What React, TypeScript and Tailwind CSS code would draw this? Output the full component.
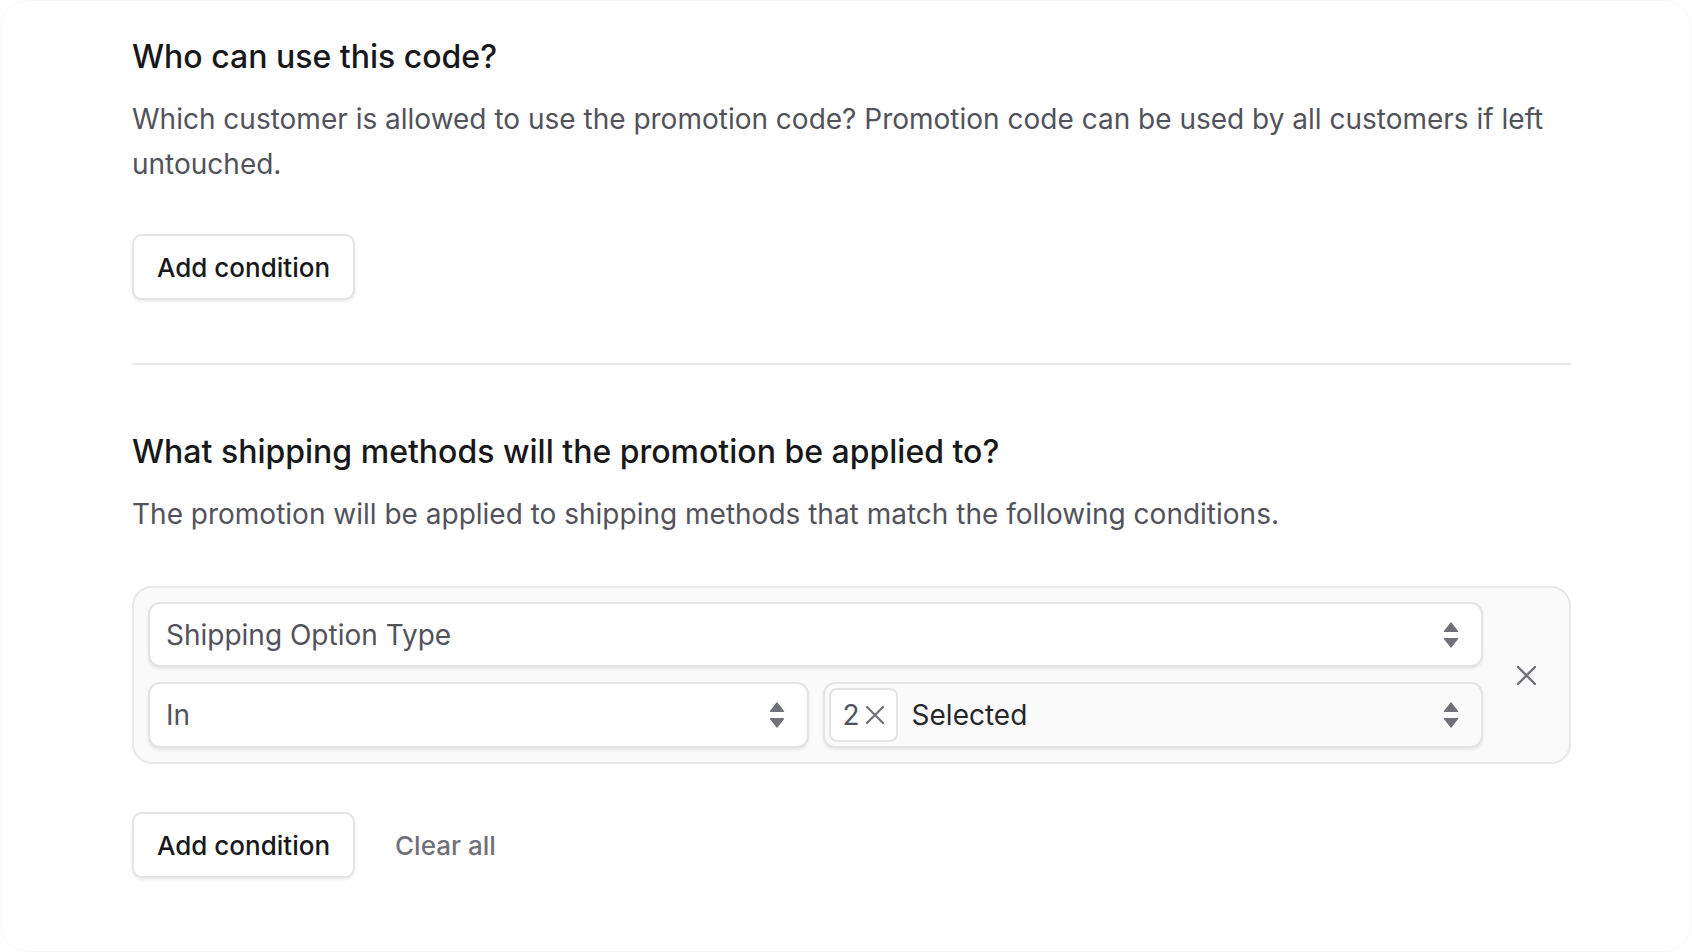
import React from "react";

// Stepper arrows shown at the right edge of each select
const TrianglesIcon: React.FC = () => (
  <svg width="30" height="30" viewBox="0 0 15 15" className="shrink-0">
    <path
      d="M4.2 5.7 L7.5 1.4 L10.8 5.7 Z"
      fill="#71717a"
      stroke="#71717a"
      strokeWidth="0.6"
      strokeLinejoin="round"
    />
    <path
      d="M4.2 9.3 L7.5 13.6 L10.8 9.3 Z"
      fill="#71717a"
      stroke="#71717a"
      strokeWidth="0.6"
      strokeLinejoin="round"
    />
  </svg>
);

const XIcon: React.FC<{ size: number; stroke?: number }> = ({
  size,
  stroke = 2.2,
}) => (
  <svg width={size} height={size} viewBox={`0 0 ${size} ${size}`}>
    <path
      d={`M1 1 L${size - 1} ${size - 1} M${size - 1} 1 L1 ${size - 1}`}
      stroke="#71717a"
      strokeWidth={stroke}
      strokeLinecap="round"
    />
  </svg>
);

const AddConditionButton: React.FC = () => (
  <button className="h-[66px] px-[23px] rounded-[10px] border-2 border-[#e4e4e7] bg-white shadow-[0_2px_3px_rgba(0,0,0,0.08)] text-[26px] font-medium text-[#18181b]">
    Add condition
  </button>
);

const SectionHeader: React.FC<{ title: string; description: string }> = ({
  title,
  description,
}) => (
  <div className="flex flex-col">
    <h2 className="text-[32px] leading-[48px] font-medium text-[#18181b]">
      {title}
    </h2>
    <p className="mt-[16px] text-[28px] leading-[45px] text-[#52525b]">
      {description}
    </p>
  </div>
);

export default function App() {
  return (
    <div
      className="w-[1692px] h-[952px] bg-white rounded-[28px] border border-[#f8f8f8] pt-[32px] pl-[131px] overflow-hidden"
      style={{ fontFamily: "Inter, 'Noto Sans', sans-serif" }}
    >
      <div className="w-[1439px] flex flex-col">
        {/* Customer conditions */}
        <SectionHeader
          title="Who can use this code?"
          description="Which customer is allowed to use the promotion code? Promotion code can be used by all customers if left untouched."
        />
        <div className="mt-[47px]">
          <AddConditionButton />
        </div>

        <div className="mt-[63px] h-[2px] bg-[#e9e9eb]" />

        {/* Shipping method conditions */}
        <div className="mt-[63px]">
          <SectionHeader
            title="What shipping methods will the promotion be applied to?"
            description="The promotion will be applied to shipping methods that match the following conditions."
          />
        </div>

        <div className="mt-[49px] flex rounded-[20px] border-2 border-[#e8e8ea] bg-[#fafafa] py-[14px] pl-[14px]">
          <div className="flex-1 flex flex-col gap-[15px]">
            <div className="h-[65px] flex items-center justify-between rounded-[12px] border-2 border-[#e4e4e7] bg-white shadow-[0_2px_3px_rgba(0,0,0,0.08)] pl-[16px] pr-[15px]">
              <span className="text-[28px] text-[#52525b]">
                Shipping Option Type
              </span>
              <TrianglesIcon />
            </div>
            <div className="grid grid-cols-2 gap-[14px]">
              <div className="h-[66px] flex items-center justify-between rounded-[12px] border-2 border-[#e4e4e7] bg-white shadow-[0_2px_3px_rgba(0,0,0,0.08)] pl-[16px] pr-[15px]">
                <span className="text-[28px] text-[#52525b]">In</span>
                <TrianglesIcon />
              </div>
              <div className="h-[66px] flex items-center rounded-[12px] border-2 border-[#e4e4e7] bg-[#fafafa] shadow-[0_2px_3px_rgba(0,0,0,0.08)] pl-[4px] pr-[15px]">
                <div className="h-[54px] flex items-center gap-[6px] rounded-[8px] border-2 border-[#e4e4e7] bg-white pl-[12px] pr-[12px]">
                  <span className="text-[28px] text-[#52525b]">2</span>
                  <XIcon size={18} />
                </div>
                <span className="ml-[14px] flex-1 text-[28px] text-[#27272a]">
                  Selected
                </span>
                <TrianglesIcon />
              </div>
            </div>
          </div>
          <div className="w-[86px] flex items-center justify-center">
            <XIcon size={19} stroke={2.4} />
          </div>
        </div>

        <div className="mt-[48px] flex items-center gap-[40px]">
          <AddConditionButton />
          <button className="text-[26px] font-medium text-[#71717a]">
            Clear all
          </button>
        </div>
      </div>
    </div>
  );
}
